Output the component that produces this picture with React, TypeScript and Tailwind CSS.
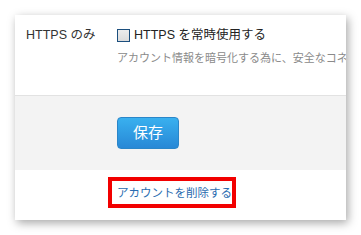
export default function App() {
  return (
    <div className="h-[235px] w-[361px] overflow-hidden bg-white p-[15px] font-['Liberation_Sans','Noto_Sans_CJK_JP',sans-serif]">
      <div className="flex h-[205px] w-[331px] flex-col bg-white shadow-[2px_3px_9px_rgba(0,0,0,0.35)]">
        <div className="flex h-[80px] pl-[11px] pt-[12px]">
          <div className="w-[91px] text-[12.5px] leading-[16px] text-[#333]">HTTPS のみ</div>
          <div className="flex min-w-0 flex-1 flex-col overflow-hidden">
            <label className="flex items-center gap-[4px] text-[12.5px] leading-[16px] text-[#222]">
              <span className="h-[13px] w-[13px] border border-[#1c4f7e] bg-gradient-to-b from-[#ececec] to-[#dcdcdc]" />
              HTTPS を常時使用する
            </label>
            <p className="mt-[8px] whitespace-nowrap text-[11px] leading-[14px] text-[#8a8a8a]">
              アカウント情報を暗号化する為に、安全なコネクションを使用します。
            </p>
          </div>
        </div>
        <div className="h-[75px] border-t border-[#e2e2e2] bg-[#f3f3f3] pl-[102px] pt-[21px]">
          <button className="h-[32px] w-[62px] rounded-[4px] border border-[#2a86c9] bg-gradient-to-b from-[#39b0ef] to-[#2888d6] text-[15px] text-white">
            保存
          </button>
        </div>
        <div className="pl-[93px] pt-[7px]">
          <div className="flex h-[31px] w-[128px] items-center border-[4px] border-[#f20000] pl-[5px]">
            <a className="whitespace-nowrap text-[11.5px] leading-[16px] text-[#2a6cb0]">アカウントを削除する</a>
          </div>
        </div>
      </div>
    </div>
  );
}
